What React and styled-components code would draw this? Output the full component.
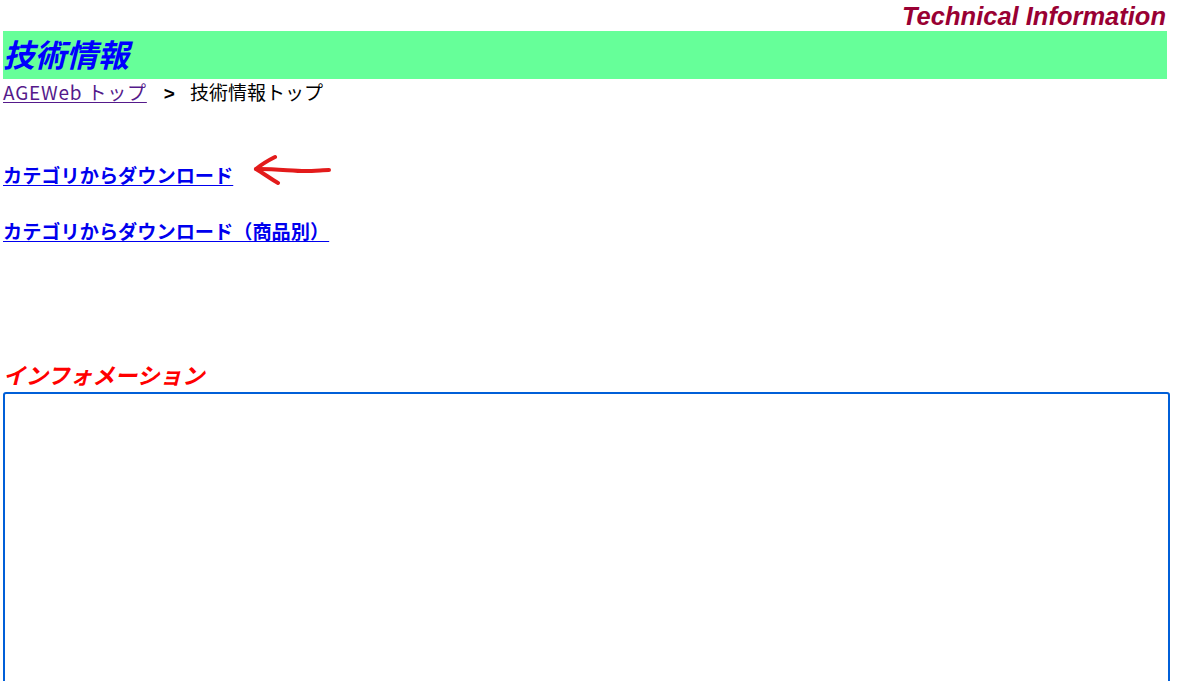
import React from "react";
import styled, { createGlobalStyle } from "styled-components";

const GlobalStyle = createGlobalStyle`
    body {
        margin: 0;
        background: #fff;
        font-family: "Noto Sans CJK JP", "Liberation Sans", sans-serif;
    }
`;

const Page = styled.div`
    width: 1164px;
    padding: 0 3px;
`;

const EnglishTitle = styled.div`
    text-align: right;
    padding: 3px 1px 0 0;
    height: 28px;
    font-family: "Liberation Sans", Arial, sans-serif;
    font-size: 25.5px;
    font-weight: 700;
    font-style: italic;
    color: #990033;
    line-height: 27px;
`;

const TitleBar = styled.h1`
    margin: 0;
    height: 48px;
    background: #66ff99;
    color: #0000ff;
    font-size: 31.5px;
    font-weight: 700;
    font-style: italic;
    line-height: 44px;
`;

const Breadcrumb = styled.div`
    display: flex;
    align-items: baseline;
    font-size: 19px;
    line-height: 26px;

    a {
        color: #551a8b;
        text-decoration: underline;
        text-underline-offset: 2px;
        letter-spacing: 0.8px;
        margin-right: 17px;
    }
`;

const Sep = styled.span`
    font-family: "Liberation Sans", Arial, sans-serif;
    font-weight: 700;
    margin-right: 15px;
`;

const LinkList = styled.div`
    margin-top: 55px;
    display: flex;
    flex-direction: column;
    gap: 30px;
`;

const LinkRow = styled.div`
    display: flex;
    align-items: center;
    gap: 20px;
    height: 26px;
`;

const DownloadLink = styled.a`
    color: #0000ee;
    font-weight: 700;
    font-size: 19.2px;
    line-height: 26px;
    text-decoration: underline;
    text-underline-offset: 2px;
`;

const SectionTitle = styled.h2`
    margin: 116px 0 0;
    color: #ff0000;
    font-size: 22.5px;
    font-weight: 700;
    font-style: italic;
    line-height: 28px;
`;

const InfoBox = styled.textarea`
    display: block;
    box-sizing: border-box;
    margin-top: 4px;
    width: 1167px;
    height: 320px;
    border: 2px solid #005fd8;
    border-radius: 3px;
    outline: none;
    resize: none;
    font-size: 16px;
    padding: 4px 3px;
    caret-color: #000;
`;

const Arrow = () => (
    <svg width="80" height="32" viewBox="0 0 80 32" style={{ marginTop: -10 }}>
        <g fill="none" stroke="#e31b1b" strokeWidth="4" strokeLinecap="round" strokeLinejoin="round">
            <path d="M3 15 C 9 10, 16 6, 22 3" />
            <path d="M3 15 C 10 19, 18 25, 25 29" />
            <path d="M6 15 C 25 15, 40 17, 52 17 C 62 17, 70 16, 76 16" />
        </g>
    </svg>
);

export default function App() {
    const ref = React.useRef(null);
    React.useEffect(() => {
        if (ref.current) ref.current.focus();
    }, []);

    return (
        <Page>
            <GlobalStyle />
            <EnglishTitle>Technical Information</EnglishTitle>
            <TitleBar>技術情報</TitleBar>
            <Breadcrumb>
                <a href="#">AGEWeb トップ</a>
                <Sep>&gt;</Sep>
                <span>技術情報トップ</span>
            </Breadcrumb>
            <LinkList>
                <LinkRow>
                    <DownloadLink href="#">カテゴリからダウンロード</DownloadLink>
                    <Arrow />
                </LinkRow>
                <LinkRow>
                    <DownloadLink href="#">カテゴリからダウンロード（商品別）</DownloadLink>
                </LinkRow>
            </LinkList>
            <SectionTitle>インフォメーション</SectionTitle>
            <InfoBox ref={ref} autoFocus />
        </Page>
    );
}
